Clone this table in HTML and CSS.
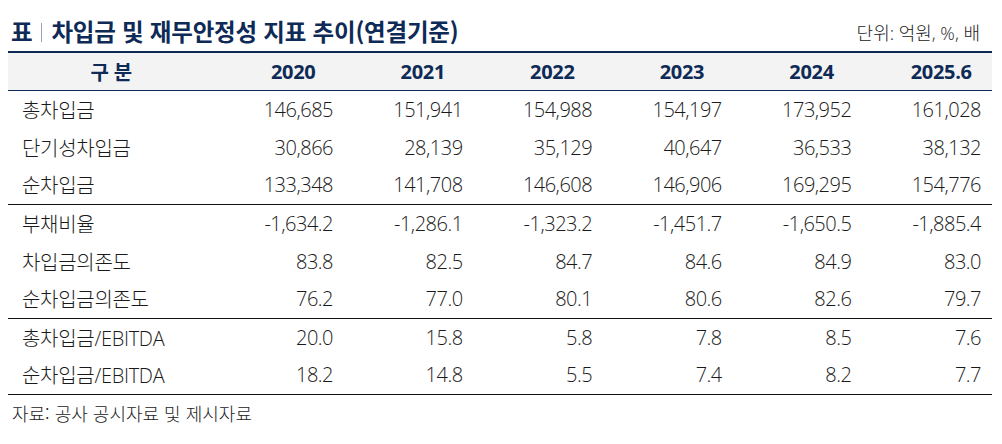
FILE: index.html
```html
<!DOCTYPE html>
<html lang="ko">
<head>
<meta charset="utf-8">
<link rel="stylesheet" href="styles.css">
</head>
<body>
<div class="page">
  <div class="titlebar">
    <h1 class="title"><span>표</span><span class="sep"></span><span>차입금 및 재무안정성 지표 추이(연결기준)</span></h1>
    <div class="unit">단위: 억원, %, 배</div>
  </div>
  <table class="tbl">
    <thead>
      <tr><th class="lab">구 분</th><th>2020</th><th>2021</th><th>2022</th><th>2023</th><th>2024</th><th>2025.6</th></tr>
    </thead>
    <tbody>
      <tr><td class="lab">총차입금</td><td>146,685</td><td>151,941</td><td>154,988</td><td>154,197</td><td>173,952</td><td>161,028</td></tr>
      <tr><td class="lab">단기성차입금</td><td>30,866</td><td>28,139</td><td>35,129</td><td>40,647</td><td>36,533</td><td>38,132</td></tr>
      <tr class="end"><td class="lab">순차입금</td><td>133,348</td><td>141,708</td><td>146,608</td><td>146,906</td><td>169,295</td><td>154,776</td></tr>
      <tr><td class="lab">부채비율</td><td>-1,634.2</td><td>-1,286.1</td><td>-1,323.2</td><td>-1,451.7</td><td>-1,650.5</td><td>-1,885.4</td></tr>
      <tr><td class="lab">차입금의존도</td><td>83.8</td><td>82.5</td><td>84.7</td><td>84.6</td><td>84.9</td><td>83.0</td></tr>
      <tr class="end"><td class="lab">순차입금의존도</td><td>76.2</td><td>77.0</td><td>80.1</td><td>80.6</td><td>82.6</td><td>79.7</td></tr>
      <tr><td class="lab">총차입금/EBITDA</td><td>20.0</td><td>15.8</td><td>5.8</td><td>7.8</td><td>8.5</td><td>7.6</td></tr>
      <tr class="end"><td class="lab">순차입금/EBITDA</td><td>18.2</td><td>14.8</td><td>5.5</td><td>7.4</td><td>8.2</td><td>7.7</td></tr>
    </tbody>
  </table>
  <div class="note">자료: 공사 공시자료 및 제시자료</div>
</div>
</body>
</html>
```
FILE: styles.css
```css
* { box-sizing: border-box; }
html, body { margin: 0; padding: 0; background: #fff; }
body { font-family: "Open Sans", "Noto Sans CJK KR", sans-serif; color: #1a1a1a; }
.page { padding: 0 10px 0 8px; width: 1002px; }
.titlebar { display: flex; justify-content: space-between; align-items: flex-end; height: 51px; padding-bottom: 5px; }
.title { margin: 0 0 0 3px; font-size: 23.5px; font-weight: 700; color: #0e2a56; display: flex; align-items: center; line-height: 30px; letter-spacing: -0.2px; font-family: "Noto Sans CJK KR", sans-serif; }
.sep { display: inline-block; width: 1px; height: 19px; background: #9aa3b3; margin: 2px 9px 0 9px; }
.unit { font-size: 18px; font-weight: 300; color: #222; line-height: 24px; margin-right: 12px; margin-bottom: 1px; }
.tbl { width: 984px; border-collapse: collapse; table-layout: fixed; }
.tbl th, .tbl td { padding: 0; }
.tbl thead tr { background: #f3f3f3; border-top: 2px solid #0e2a56; border-bottom: 1.5px solid #0e2a56; }
.tbl th { height: 38px; font-size: 20px; font-weight: 700; color: #0e2a56; text-align: center; padding-left: 28px; width: 129.6px; letter-spacing: -0.3px; }
.tbl th.lab { width: 206.4px; padding-left: 0; text-align: center; font-family: "Noto Sans CJK KR", sans-serif; font-weight: 700; }
.tbl td { height: 38px; font-size: 20px; font-weight: 300; text-align: right; padding-right: 11px; color: #1a1a1a; letter-spacing: -0.5px; }
.tbl td.lab { text-align: left; padding-left: 14px; padding-right: 0; letter-spacing: -0.3px; }
.tbl tr.end { border-bottom: 1.5px solid #111; }
.note { font-size: 18px; font-weight: 300; color: #222; margin: 6px 0 0 4px; line-height: 24px; font-family: "Noto Sans CJK KR", sans-serif; }
```
